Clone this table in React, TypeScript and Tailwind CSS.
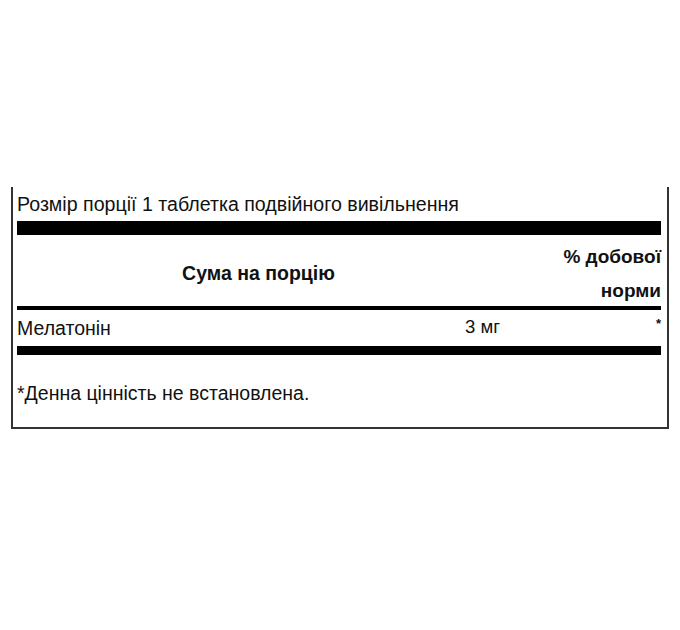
export default function App() {
  return (
    <div className="w-[680px] h-[630px] pt-[187px] bg-white font-['Liberation_Sans',Arial,sans-serif] text-[#111]">
      <div className="ml-[11px] w-[658px] border-x-2 border-b-2 border-[#333] pl-[4px] pr-[6px]">
        <div className="h-[34px] leading-[34px] text-[19.6px]">
          Розмір порції 1 таблетка подвійного вивільнення
        </div>
        <div className="h-[14px] bg-black" />

        <div className="flex items-center">
          <div className="flex-1 text-center font-bold text-[19.5px] pt-[6px]">Сума на порцію</div>
          <div className="w-[161px] text-right font-bold text-[19px] leading-[34px] pt-[5px] pb-[-1px]">
            <div>% добової</div>
            <div className="-mb-[2px]">норми</div>
          </div>
        </div>
        <div className="h-[4px] bg-black" />

        <div className="flex h-[36px] items-center text-[19.5px]">
          <div className="flex-1 pt-[2px]">Мелатонін</div>
          <div className="-mt-[3px] text-[18.6px]">3 мг</div>
          <div className="w-[161px] text-right text-[13px] font-bold -mt-[8px]">*</div>
        </div>
        <div className="h-[9px] bg-black" />

        <div className="pt-[26px] pb-[22px] leading-[24px] text-[19.5px]">
          *Денна цінність не встановлена.
        </div>
      </div>
    </div>
  )
}
